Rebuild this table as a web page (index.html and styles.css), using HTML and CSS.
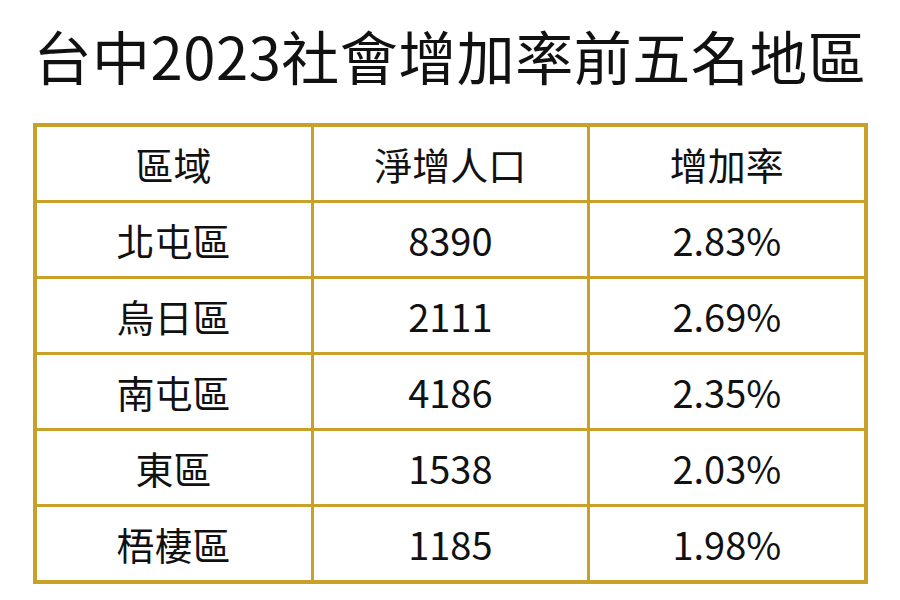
FILE: index.html
```html
<!DOCTYPE html>
<html lang="zh-Hant">
<head>
<meta charset="utf-8">
<link rel="stylesheet" href="styles.css">
</head>
<body>
<div class="page">
  <h1 class="title">台中2023社會增加率前五名地區</h1>
  <table class="rank">
    <thead>
      <tr><th>區域</th><th>淨增人口</th><th>增加率</th></tr>
    </thead>
    <tbody>
      <tr><td>北屯區</td><td>8390</td><td>2.83%</td></tr>
      <tr><td>烏日區</td><td>2111</td><td>2.69%</td></tr>
      <tr><td>南屯區</td><td>4186</td><td>2.35%</td></tr>
      <tr><td>東區</td><td>1538</td><td>2.03%</td></tr>
      <tr><td>梧棲區</td><td>1185</td><td>1.98%</td></tr>
    </tbody>
  </table>
</div>
</body>
</html>
```

FILE: styles.css
```css
html, body {
  margin: 0;
  padding: 0;
  background: #ffffff;
}
.page {
  width: 900px;
  height: 600px;
  display: flex;
  flex-direction: column;
  align-items: center;
  font-family: "Noto Sans CJK TC", "Noto Sans", sans-serif;
  color: #111111;
}
.title {
  margin: 12px 0 0 0;
  font-size: 58px;
  font-weight: 400;
  line-height: 86px;
  letter-spacing: 0.5px;
  white-space: nowrap;
}
.rank {
  margin-top: 25px;
  width: 835px;
  border-collapse: collapse;
  border: 4px solid #c9a028;
  table-layout: fixed;
}
.rank th, .rank td {
  border: 3px solid #c9a028;
  height: 73px;
  padding: 0;
  text-align: center;
  vertical-align: middle;
  font-size: 38px;
  font-weight: 400;
  line-height: 1;
}
.rank th:first-child, .rank td:first-child {
  width: 274px;
}
```
